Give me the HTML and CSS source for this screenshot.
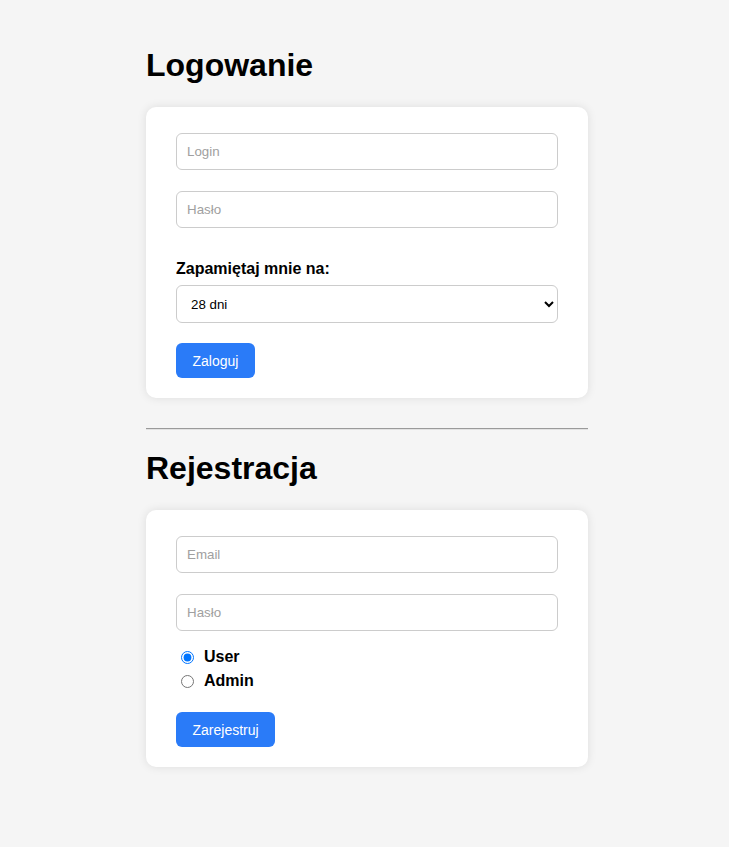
FILE: index.html
```html
<!DOCTYPE html>
<html lang="pl">
<head>
<meta charset="utf-8">
<title>Logowanie</title>
<link rel="stylesheet" href="styles.css">
</head>
<body>
<main class="page">
  <h1 class="title">Logowanie</h1>
  <form class="card">
    <input class="field" type="text" placeholder="Login">
    <input class="field field-last" type="password" placeholder="Hasło">
    <label class="select-label" for="remember">Zapamiętaj mnie na:</label>
    <select id="remember" class="select">
      <option>28 dni</option>
      <option>7 dni</option>
      <option>1 dzień</option>
    </select>
    <button type="button" class="btn">Zaloguj</button>
  </form>

  <hr class="divider">

  <h1 class="title">Rejestracja</h1>
  <form class="card">
    <input class="field" type="email" placeholder="Email">
    <input class="field field-reg" type="password" placeholder="Hasło">
    <div class="radios">
      <label class="radio-row"><input type="radio" name="role" checked><span>User</span></label>
      <label class="radio-row"><input type="radio" name="role"><span>Admin</span></label>
    </div>
    <button type="button" class="btn">Zarejestruj</button>
  </form>
</main>
</body>
</html>
```
FILE: styles.css
```css
html, body {
  margin: 0;
  padding: 0;
  background: #f5f5f5;
}
body {
  font-family: "Liberation Sans", Arial, sans-serif;
  color: #000;
  padding-left: 5px;
}
.page {
  width: 442px;
  margin: 0 auto;
  padding-top: 47px;
  padding-bottom: 60px;
}
.title {
  font-size: 32px;
  line-height: 37px;
  font-weight: bold;
  margin: 0 0 23px;
}
.card {
  background: #fff;
  border-radius: 10px;
  box-shadow: 0 0 10px rgba(0, 0, 0, 0.1);
  padding: 26px 30px 20px;
  display: flex;
  flex-direction: column;
  align-items: flex-start;
}
.field {
  box-sizing: border-box;
  width: 100%;
  height: 37px;
  margin: 0 0 21px;
  padding: 0 10px;
  border: 1px solid #ccc;
  border-radius: 6px;
  font-family: "Liberation Sans", Arial, sans-serif;
  font-size: 13.333px;
  background: #fff;
  color: #000;
  outline: none;
}
.field::placeholder {
  color: #a0a0a0;
}
.field-last {
  margin-bottom: 32px;
}
.field-reg {
  margin-bottom: 14px;
}
.select-label {
  display: block;
  font-size: 16px;
  font-weight: bold;
  line-height: 18px;
  margin-bottom: 7px;
}
.select {
  box-sizing: border-box;
  width: 100%;
  height: 38px;
  padding: 0 6px 0 10px;
  border: 1px solid #ccc;
  border-radius: 6px;
  background: #fff;
  font-family: "Liberation Sans", Arial, sans-serif;
  font-size: 13.333px;
  color: #000;
  margin-bottom: 20px;
}
.btn {
  height: 35px;
  padding: 0 16.5px;
  border: none;
  border-radius: 6px;
  background: #2a7bf8;
  color: #fff;
  font-family: "Liberation Sans", Arial, sans-serif;
  font-size: 14px;
  cursor: pointer;
}
.divider {
  margin: 30px 0 20px;
  border: 0;
  border-top: 1px solid #9a9a9a;
  border-bottom: 1px solid #e2e2e2;
  height: 0;
}
.radios {
  display: flex;
  flex-direction: column;
  margin-bottom: 19px;
}
.radio-row {
  display: flex;
  align-items: center;
  height: 24px;
  font-size: 16px;
  font-weight: bold;
}
.radio-row input {
  width: 13px;
  height: 13px;
  margin: 0 10px 0 5px;
}
```
